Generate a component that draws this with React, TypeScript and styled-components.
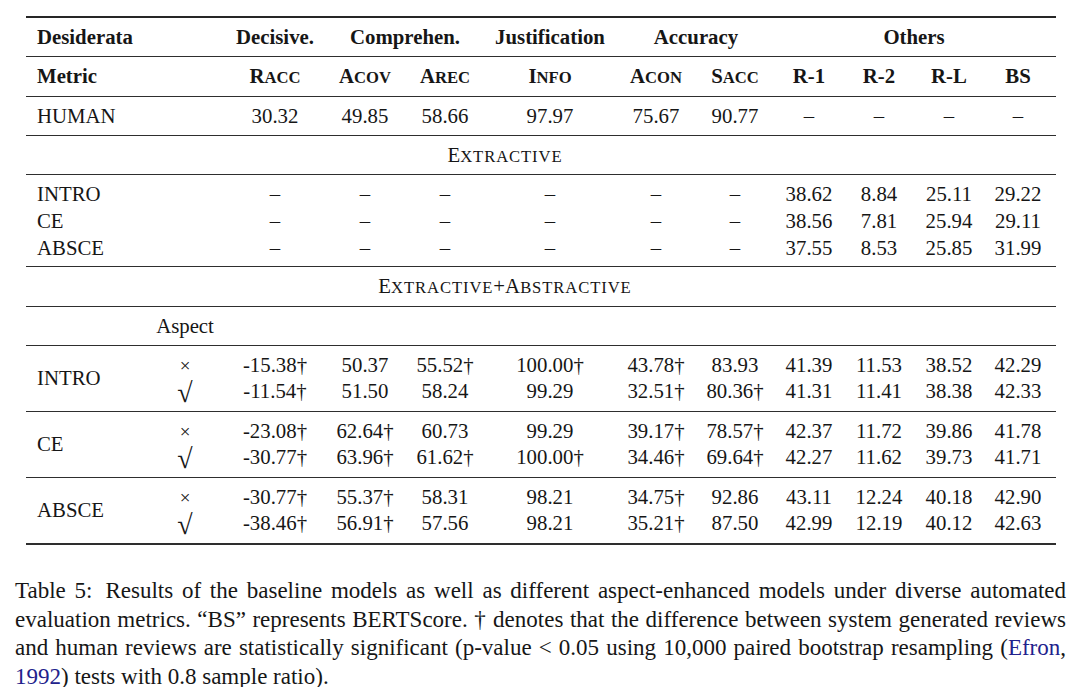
import React from "react";
import styled, { createGlobalStyle } from "styled-components";

const GlobalStyle = createGlobalStyle`
  html, body { margin: 0; padding: 0; background: #ffffff; }
  body {
    font-family: "Liberation Serif", "Times New Roman", serif;
    color: #161616;
  }
`;

const COLS = "114px 90px 90px 90px 70px 140px 72px 86px 62px 78px 62px 76px";

const Page = styled.div`
  width: 1080px;
  box-sizing: border-box;
  padding: 16px 14px 0 15px;
`;

const Table = styled.div`
  width: 1030px;
  margin-left: 11px;
  border-top: 2px solid #262626;
  font-size: 20.8px;
`;

const Block = styled.div<{ $rowH: number; $padTop?: number; $padBottom?: number; $thick?: boolean }>`
  display: grid;
  grid-template-columns: ${COLS};
  grid-auto-rows: ${(p) => p.$rowH}px;
  padding: ${(p) => p.$padTop ?? 0}px 0 ${(p) => p.$padBottom ?? 0}px;
  border-bottom: ${(p) => (p.$thick ? 2 : 1)}px solid #2e2e2e;
`;

const Cell = styled.div<{
  $span?: number;
  $rows?: number;
  $left?: boolean;
  $bold?: boolean;
  $lead?: number;
  $shift?: number;
}>`
  grid-column: span ${(p) => p.$span ?? 1};
  grid-row: span ${(p) => p.$rows ?? 1};
  display: flex;
  align-items: center;
  justify-content: ${(p) => (p.$left ? "flex-start" : "center")};
  padding-left: ${(p) => (p.$left ? 11 : p.$lead ?? 0)}px;
  padding-right: ${(p) => p.$shift ?? 0}px;
  font-weight: ${(p) => (p.$bold ? 700 : 400)};
  white-space: nowrap;
  line-height: 1;
`;

const Small = styled.span<{ $wide?: boolean }>`
  font-size: 0.8em;
  letter-spacing: ${(p) => (p.$wide ? 0.9 : 0)}px;
`;

const Mark = styled.span<{ $check?: boolean }>`
  font-size: ${(p) => (p.$check ? 28 : 19)}px;
  transform: translateY(${(p) => (p.$check ? 2 : 0)}px);
`;

const Caption = styled.div`
  margin-top: 32px;
  width: 1051px;
  font-size: 23px;
  line-height: 28.5px;
`;

const CaptionLine = styled.div<{ $last?: boolean }>`
  white-space: nowrap;
  text-align: ${(p) => (p.$last ? "left" : "justify")};
  text-align-last: ${(p) => (p.$last ? "left" : "justify")};
`;

const Gap = styled.span`
  display: inline-block;
  width: 13px;
`;

const Cite = styled.span`
  color: #22228c;
`;

const DASH = "\u2013";

function Sc({ text, wide }: { text: string; wide?: boolean }) {
  return (
    <span>
      {text[0]}
      <Small $wide={wide}>{text.slice(1).toUpperCase()}</Small>
    </span>
  );
}

const extractive: [string, string[]][] = [
  ["INTRO", ["38.62", "8.84", "25.11", "29.22"]],
  ["CE", ["38.56", "7.81", "25.94", "29.11"]],
  ["ABSCE", ["37.55", "8.53", "25.85", "31.99"]],
];

const groups: [string, string[][]][] = [
  [
    "INTRO",
    [
      ["-15.38†", "50.37", "55.52†", "100.00†", "43.78†", "83.93", "41.39", "11.53", "38.52", "42.29"],
      ["-11.54†", "51.50", "58.24", "99.29", "32.51†", "80.36†", "41.31", "11.41", "38.38", "42.33"],
    ],
  ],
  [
    "CE",
    [
      ["-23.08†", "62.64†", "60.73", "99.29", "39.17†", "78.57†", "42.37", "11.72", "39.86", "41.78"],
      ["-30.77†", "63.96†", "61.62†", "100.00†", "34.46†", "69.64†", "42.27", "11.62", "39.73", "41.71"],
    ],
  ],
  [
    "ABSCE",
    [
      ["-30.77†", "55.37†", "58.31", "98.21", "34.75†", "92.86", "43.11", "12.24", "40.18", "42.90"],
      ["-38.46†", "56.91†", "57.56", "98.21", "35.21†", "87.50", "42.99", "12.19", "40.12", "42.63"],
    ],
  ],
];

const metrics = ["Racc", "Acov", "Arec", "Info", "Acon", "Sacc"];
const others = ["R-1", "R-2", "R-L", "BS"];
const humanVals = ["30.32", "49.85", "58.66", "97.97", "75.67", "90.77"];

export default function App() {
  return (
    <Page>
      <GlobalStyle />
      <Table>
        <Block $rowH={38}>
          <Cell $left $bold $span={2}>Desiderata</Cell>
          <Cell $bold>Decisive.</Cell>
          <Cell $bold $span={2} $lead={10}>Comprehen.</Cell>
          <Cell $bold>Justification</Cell>
          <Cell $bold $span={2} $shift={6}>Accuracy</Cell>
          <Cell $bold $span={4} $shift={6}>Others</Cell>
        </Block>
        <Block $rowH={39}>
          <Cell $left $bold $span={2}>Metric</Cell>
          {metrics.map((m) => (
            <Cell key={m} $bold>
              <Sc text={m} />
            </Cell>
          ))}
          {others.map((m) => (
            <Cell key={m} $bold>{m}</Cell>
          ))}
        </Block>
        <Block $rowH={38}>
          <Cell $left $span={2}>HUMAN</Cell>
          {humanVals.map((v) => (
            <Cell key={v}>{v}</Cell>
          ))}
          {others.map((m) => (
            <Cell key={m}>{DASH}</Cell>
          ))}
        </Block>
        <Block $rowH={38}>
          <Cell $span={12} $shift={72}>
            <Sc text="Extractive" wide />
          </Cell>
        </Block>
        <Block $rowH={27} $padTop={6} $padBottom={4}>
          {extractive.map(([name, vals]) => (
            <React.Fragment key={name}>
              <Cell $left $span={2}>{name}</Cell>
              {metrics.map((m) => (
                <Cell key={m}>{DASH}</Cell>
              ))}
              {vals.map((v, i) => (
                <Cell key={i}>{v}</Cell>
              ))}
            </React.Fragment>
          ))}
        </Block>
        <Block $rowH={39}>
          <Cell $span={12} $shift={72}>
            <Sc text="Extractive" wide />+<Sc text="Abstractive" wide />
          </Cell>
        </Block>
        <Block $rowH={38}>
          <Cell />
          <Cell>Aspect</Cell>
        </Block>
        {groups.map(([name, rows], gi) => (
          <Block key={name} $rowH={26} $padTop={6} $padBottom={7} $thick={gi === groups.length - 1}>
            <Cell $left $rows={2}>{name}</Cell>
            {rows.map((vals, ri) => (
              <React.Fragment key={ri}>
                <Cell>{ri === 0 ? <Mark>×</Mark> : <Mark $check>√</Mark>}</Cell>
                {vals.map((v, i) => (
                  <Cell key={i}>{v}</Cell>
                ))}
              </React.Fragment>
            ))}
          </Block>
        ))}
      </Table>
      <Caption>
        <CaptionLine>
          Table 5:<Gap />Results of the baseline models as well as different aspect-enhanced models under diverse automated
        </CaptionLine>
        <CaptionLine>
          evaluation metrics. “BS” represents BERTScore. † denotes that the difference between system generated reviews
        </CaptionLine>
        <CaptionLine>
          and human reviews are statistically significant (p-value &lt; 0.05 using 10,000 paired bootstrap resampling (<Cite>Efron</Cite>,
        </CaptionLine>
        <CaptionLine $last>
          <Cite>1992</Cite>) tests with 0.8 sample ratio).
        </CaptionLine>
      </Caption>
    </Page>
  );
}
